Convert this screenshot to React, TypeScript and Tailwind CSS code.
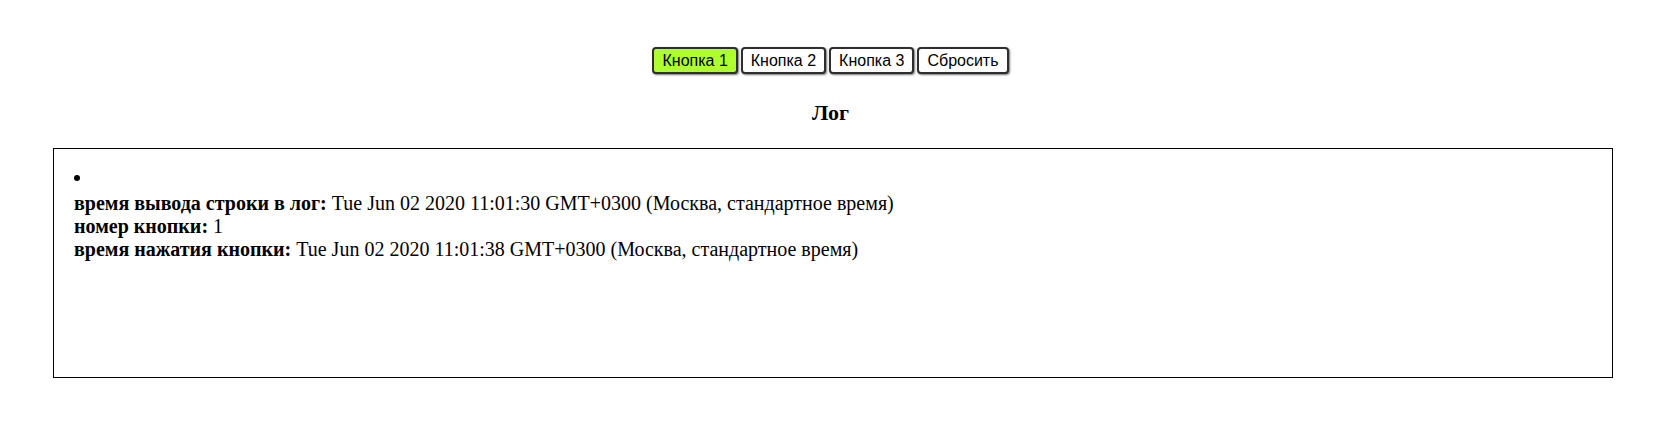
import React from "react"

const buttons = ["Кнопка 1", "Кнопка 2", "Кнопка 3", "Сбросить"]

export default function App() {
  const [active, setActive] = React.useState(0)

  return (
    <div className="min-h-[435px] bg-white text-black" style={{ fontFamily: '"Liberation Serif", "Times New Roman", serif' }}>
      <div className="flex justify-center gap-[3px] pt-[47px]">
        {buttons.map((b, i) => (
          <button
            key={b}
            onClick={() => setActive(i)}
            className={
              "h-[27px] px-[8px] rounded-[4px] border-2 border-[#2e2e2e] text-[16px] leading-none text-black shadow-[1px_1px_2px_rgba(0,0,0,0.55)] " +
              (active === i ? "bg-[#adff2f]" : "bg-white")
            }
            style={{ fontFamily: '"Liberation Sans", Arial, sans-serif' }}
          >
            {b}
          </button>
        ))}
      </div>

      <h3 className="mt-[26px] text-center text-[22px] font-bold leading-[26px]">Лог</h3>

      <div className="ml-[53px] mt-[22px] h-[230px] w-[1560px] border border-black pl-[20px] pt-[17px] text-[20px] leading-[23px]">
        <ul className="list-inside list-disc">
          <li>
            <div className="mt-[3px]">
              <b>время вывода строки в лог:</b> Tue Jun 02 2020 11:01:30 GMT+0300 (Москва, стандартное время)
              <br />
              <b>номер кнопки:</b> 1
              <br />
              <b>время нажатия кнопки:</b> Tue Jun 02 2020 11:01:38 GMT+0300 (Москва, стандартное время)
            </div>
          </li>
        </ul>
      </div>
    </div>
  )
}
